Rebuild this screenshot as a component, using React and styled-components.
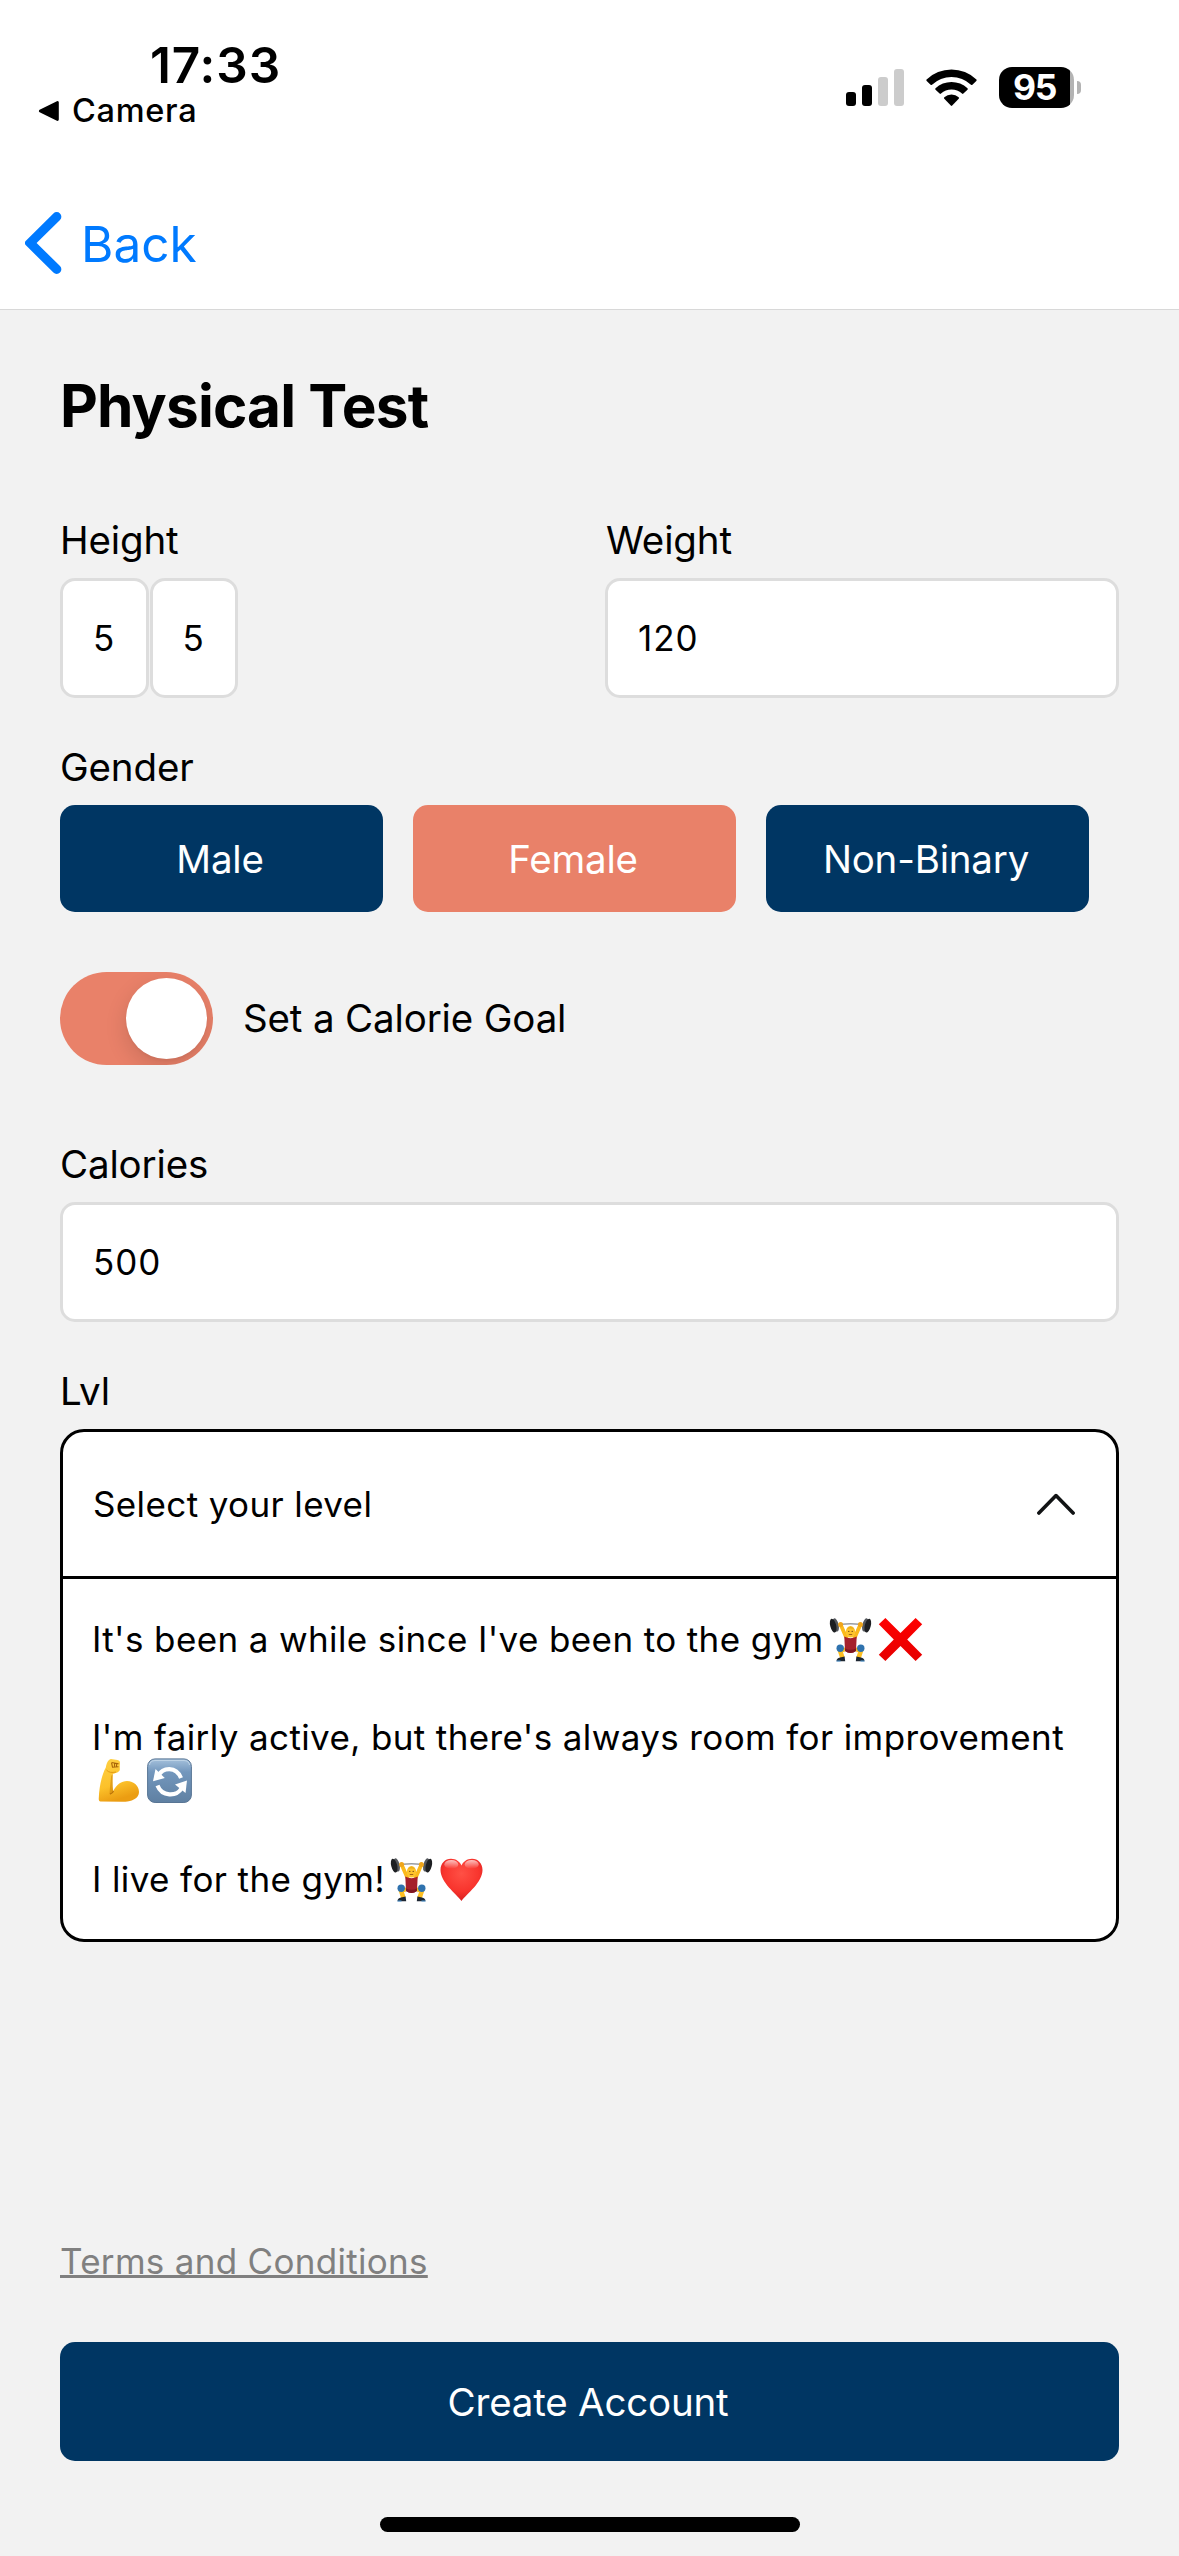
import React from "react";
import styled, { createGlobalStyle } from "styled-components";

const GlobalStyle = createGlobalStyle`
  *, *::before, *::after { box-sizing: border-box; }
  html, body { margin: 0; padding: 0; }
  body {
    background: #f2f2f2;
    color: #000;
    font-family: Inter, Roboto, "Liberation Sans", sans-serif;
    font-variant-ligatures: none;
  }
`;

const colors = {
  navy: "#003663",
  coral: "#e98169",
  blue: "#007aff",
  fieldBorder: "#dddddd",
};

/* ---------- layout ---------- */

const Screen = styled.div`
  display: flex;
  flex-direction: column;
  width: 1179px;
  height: 2556px;
  overflow: hidden;
  background: #f2f2f2;
`;

const Header = styled.header`
  display: flex;
  flex-direction: column;
  height: 310px;
  background: #fff;
  border-bottom: 1px solid #d8d8d8;
`;

const StatusBar = styled.div`
  display: flex;
  justify-content: space-between;
  height: 176px;
  padding: 35px 98px 0 38px;
`;

const StatusLeft = styled.div`
  display: flex;
  flex-direction: column;
`;

const Clock = styled.time`
  padding-left: 112px;
  font-size: 49.5px;
  font-weight: 600;
  line-height: 60px;
  letter-spacing: 0.9px;
`;

const ReturnLink = styled.div`
  display: flex;
  align-items: center;
  gap: 12px;
  height: 32px;
  font-size: 32.5px;
  font-weight: 450;
  line-height: 32px;
  letter-spacing: 0.7px;
`;

const StatusIcons = styled.div`
  display: flex;
  height: 41px;
  margin-top: 32px;
`;

const SignalIcon = styled.svg`
  width: 58px;
  height: 37px;
  margin-top: 2px;
`;

const WifiIcon = styled.svg`
  width: 51px;
  height: 38px;
  margin: 2px 22px 0;
`;

const Battery = styled.div`
  display: flex;
  align-items: center;
  gap: 3px;
`;

const BatteryCell = styled.div`
  display: flex;
  align-items: center;
  justify-content: center;
  width: 75px;
  height: 41px;
  padding: 0 4px 0 0;
  border-radius: 13px;
  background: linear-gradient(to right, #000 71px, #b3b3b3 71px);
  color: #fff;
  font-size: 35.5px;
  font-weight: 700;
  line-height: 41px;
  letter-spacing: -1.4px;
`;

const BatteryTip = styled.div`
  width: 4px;
  height: 13px;
  border-radius: 0 6px 6px 0;
  background: #b3b3b3;
`;

const BackButton = styled.div`
  display: flex;
  align-items: center;
  gap: 19px;
  height: 133px;
  padding: 0 0 0 25px;
  color: ${colors.blue};
  font-size: 49.5px;
  line-height: 60px;
  letter-spacing: 0;
`;

const BackIcon = styled.svg`
  width: 37px;
  height: 62px;
`;

const BackText = styled.span`
  padding-top: 2px;
`;

const Content = styled.main`
  display: flex;
  flex: 1;
  flex-direction: column;
  padding: 60px 60px 0;
`;

const Title = styled.h1`
  margin: 0 0 74px;
  font-size: 58.5px;
  font-weight: 700;
  line-height: 72px;
  letter-spacing: -0.85px;
`;

/* ---------- form ---------- */

const Form = styled.form`
  display: flex;
  flex-direction: column;
`;

const Columns = styled.div`
  display: grid;
  grid-template-columns: 514px 514px;
  column-gap: 31px;
  margin-bottom: 45px;
`;

const Field = styled.div`
  display: flex;
  flex-direction: column;
  margin-bottom: ${(p) => p.$below || 0}px;
`;

const Label = styled.div`
  height: 48px;
  margin-bottom: 14px;
  padding-left: ${(p) => p.$indent || 0}px;
  font-size: 38.5px;
  line-height: 48px;
  letter-spacing: -0.15px;
`;

const Inputs = styled.div`
  display: flex;
  gap: 1px;
`;

const Input = styled.div`
  display: flex;
  align-items: center;
  width: ${(p) => p.$width || "100%"};
  height: 120px;
  padding: 0 30px;
  border: 3px solid ${colors.fieldBorder};
  border-radius: 15px;
  background: #fff;
  font-size: 35px;
  letter-spacing: 0.9px;
`;

const Choices = styled.div`
  display: flex;
  gap: 30px;
`;

const Button = styled.button`
  display: flex;
  align-items: center;
  justify-content: center;
  width: ${(p) => p.$width || "100%"};
  height: ${(p) => p.$height}px;
  padding: 0 3px 0 0;
  border: 0;
  border-radius: 15px;
  background: ${(p) => (p.$selected ? colors.coral : colors.navy)};
  color: #fff;
  font-family: inherit;
  font-size: 38.5px;
  line-height: 48px;
  letter-spacing: -0.2px;
`;

const ToggleRow = styled.div`
  display: flex;
  align-items: center;
  gap: 30px;
  margin-bottom: 75px;
  font-size: 38.5px;
  line-height: 48px;
  letter-spacing: -0.15px;
`;

const ToggleText = styled.span`
  padding-bottom: 1px;
`;

const Switch = styled.div`
  display: flex;
  align-items: center;
  justify-content: flex-end;
  width: 153px;
  height: 93px;
  padding: 6px;
  border-radius: 47px;
  background: ${colors.coral};
  overflow: hidden;
`;

const Knob = styled.div`
  width: 81px;
  height: 81px;
  border-radius: 50%;
  background: #fff;
  box-shadow: 0 8px 22px rgba(0, 0, 0, 0.13), 0 2px 3px rgba(0, 0, 0, 0.04);
`;

/* ---------- dropdown ---------- */

const Dropdown = styled.div`
  display: flex;
  flex-direction: column;
  height: 513px;
  border: 3px solid #000;
  border-radius: 24px;
  background: #fff;
  font-size: 35px;
  line-height: 43px;
  letter-spacing: 0.38px;
`;

const DropdownHeader = styled.div`
  display: flex;
  align-items: center;
  justify-content: space-between;
  height: 147px;
  padding: 0 41px 0 30px;
  border-bottom: 3px solid #000;
`;

const ChevronIcon = styled.svg`
  width: 38px;
  height: 22px;
`;

const Options = styled.div`
  display: flex;
  flex-direction: column;
  gap: 55.3px;
  padding: 39px 20px 0 29px;
`;

const Option = styled.div`
  display: flex;
  flex-wrap: wrap;
`;

const Emojis = styled.span`
  display: flex;
  align-items: center;
  gap: 5.5px;
  height: 43px;
  padding-left: 4px;
`;

const Emoji = styled.svg`
  flex: none;
  width: 45px;
  height: 45px;
`;

/* ---------- footer ---------- */

const Footer = styled.footer`
  display: flex;
  flex-direction: column;
  align-items: flex-start;
  margin-top: auto;
  padding: 0 0 24px;
`;

const TermsLink = styled.span`
  margin-bottom: 59px;
  color: #808080;
  font-size: 35px;
  line-height: 43px;
  letter-spacing: 0.3px;
  text-decoration: underline;
  text-decoration-thickness: 3px;
  text-decoration-skip-ink: none;
  text-underline-offset: 1px;
`;

const HomeIndicator = styled.div`
  align-self: center;
  width: 420px;
  height: 15px;
  margin-top: 56px;
  border-radius: 8px;
  background: #000;
`;

/* ---------- emoji drawings ---------- */

const Lifter = () => (
  <Emoji viewBox="0 0 45 45">
    <path d="M5 9 Q22.5 4.5 40 9" fill="none" stroke="#9a9da3" strokeWidth="1.3" />
    <ellipse cx="7.6" cy="8" rx="3" ry="6.8" transform="rotate(-14 7.6 8)" fill="#55585d" />
    <ellipse cx="5.2" cy="8.6" rx="3" ry="7" transform="rotate(-14 5.2 8.6)" fill="#1d1f22" />
    <ellipse cx="37.4" cy="8" rx="3" ry="6.8" transform="rotate(14 37.4 8)" fill="#55585d" />
    <ellipse cx="39.8" cy="8.6" rx="3" ry="7" transform="rotate(14 39.8 8.6)" fill="#1d1f22" />
    <path d="M13 8.5 L18.5 21 M32 8.5 L26.5 21" stroke="#fbb91b" strokeWidth="3.8" strokeLinecap="round" />
    <circle cx="12.6" cy="7.6" r="2.5" fill="#efa51b" />
    <circle cx="32.4" cy="7.6" r="2.5" fill="#efa51b" />
    <path d="M17 33 L11.5 32 L14.5 41 M28 33 L33.5 32 L30.5 41" fill="none" stroke="#fdbf22" strokeWidth="4.6" strokeLinejoin="round" />
    <path d="M16.3 19.5 Q22.5 23 28.7 19.5 L28 34 Q22.5 38 17 34 Z" fill="#a5202c" />
    <path d="M17 31.5 Q22.5 34 28 31.5 L28 34 Q22.5 38 17 34 Z" fill="#7e1722" />
    <ellipse cx="22.5" cy="14.8" rx="4.7" ry="5.8" fill="#fdc32c" />
    <path d="M18.6 12.4 Q22.5 6.5 26.4 12.4 Q22.5 10.4 18.6 12.4Z" fill="#eeb01c" />
    <circle cx="20.8" cy="14.4" r="0.65" fill="#6b4213" />
    <circle cx="24.2" cy="14.4" r="0.65" fill="#6b4213" />
    <path d="M20.8 17.5 h3.4" stroke="#9b5b17" strokeWidth="0.9" />
    <circle cx="12.2" cy="31.3" r="3.7" fill="#2f72ae" />
    <circle cx="32.8" cy="31.3" r="3.7" fill="#2f72ae" />
    <path d="M8.5 44.3 Q8.6 41.2 12 40.6 L16.6 39.6 L17.2 44.3 Z" fill="#1d2733" />
    <path d="M36.5 44.3 Q36.4 41.2 33 40.6 L28.4 39.6 L27.8 44.3 Z" fill="#1d2733" />
    <path d="M8.5 44 h4 M32.5 44 h4" stroke="#4c9de0" strokeWidth="1.2" />
  </Emoji>
);

const Cross = () => (
  <Emoji viewBox="0 0 45 45">
    <defs>
      <linearGradient id="crossRed" x1="0" y1="0" x2="0" y2="1">
        <stop offset="0" stopColor="#ff0000" />
        <stop offset="1" stopColor="#e60000" />
      </linearGradient>
    </defs>
    <path
      d="M7.4 1 L22.5 16 L37.6 1 L44.2 7.3 L29.2 22.5 L44.2 37.7 L37.6 44 L22.5 29 L7.4 44 L0.8 37.7 L15.8 22.5 L0.8 7.3 Z"
      fill="url(#crossRed)"
    />
  </Emoji>
);

const Biceps = () => (
  <Emoji viewBox="0 0 45 45">
    <defs>
      <linearGradient id="armYellow" x1="0" y1="0" x2="0.3" y2="1">
        <stop offset="0" stopColor="#ffd145" />
        <stop offset="0.65" stopColor="#fcc12a" />
        <stop offset="1" stopColor="#eb9d12" />
      </linearGradient>
    </defs>
    <path
      d="M9.8 9.5 C10.5 5.5 12.2 1.5 15 1.1 L21.5 2 C24 2.4 24.4 4.5 23.8 7 L23.8 12 C23.2 14.5 18.5 15.2 16.7 16 C16.6 22 16 28.5 17.2 33 C20.5 26.5 25.5 23 31 23 C38 23 43 28 43 34 C43 40.5 36 43.8 26 43.8 L4.5 43.4 C3 43.2 2.6 42 2.8 40 C3.2 30 5.2 18 9.8 9.5 Z"
      fill="url(#armYellow)"
    />
    <path d="M15.2 18 C14.4 26 13.7 31 13.6 36 L17.3 33.8 C16.4 28 16.5 22 16.7 16 Z" fill="#d28a0b" opacity="0.65" />
    <path d="M14 36.2 C15.5 35.2 17 35 17.4 33" fill="none" stroke="#b87008" strokeWidth="1.2" />
    <path d="M15.5 4.5 L22.6 5.8 M15.6 5 L16.5 9.2 L22.5 8.8 M18.6 5.2 L18.5 8.6 M20.8 5.5 L20.4 8.4" fill="none" stroke="#a96408" strokeWidth="1.1" />
    <path d="M10.5 12 C12.5 14.6 16 14.9 20 14" fill="none" stroke="#e39a12" strokeWidth="1" />
  </Emoji>
);

const Refresh = () => (
  <Emoji viewBox="0 0 45 45">
    <defs>
      <linearGradient id="tileBlue" x1="0" y1="0" x2="0" y2="1">
        <stop offset="0" stopColor="#a5c1dc" />
        <stop offset="0.3" stopColor="#7397bd" />
        <stop offset="1" stopColor="#5f80a2" />
      </linearGradient>
    </defs>
    <rect x="0.6" y="0.9" width="43.8" height="43.6" rx="7.5" fill="url(#tileBlue)" stroke="#587594" strokeWidth="1" />
    <path d="M2.5 7 Q3 2.8 8 2.5 H37 Q42 2.8 42.5 7" fill="none" stroke="#c2d6e8" strokeWidth="0.9" />
    <g fill="none" stroke="#fff" strokeWidth="4.2">
      <path d="M11.5 17.5 C15.5 9.5 29 7.5 34 20" />
      <path d="M10.5 27.5 C15 39 29.5 38.5 34.5 30.5" />
    </g>
    <path d="M8.5 11 L6 23.3 L17.8 20 Z" fill="#fff" />
    <path d="M40 22.6 L28 26.4 L38.5 35 Z" fill="#fff" />
  </Emoji>
);

const Heart = () => (
  <Emoji viewBox="0 0 45 45">
    <defs>
      <radialGradient id="heartRed" cx="0.5" cy="0.35" r="0.65">
        <stop offset="0" stopColor="#ff5045" />
        <stop offset="0.65" stopColor="#f8342d" />
        <stop offset="1" stopColor="#d71f20" />
      </radialGradient>
      <linearGradient id="heartShine" x1="0" y1="0" x2="0" y2="1">
        <stop offset="0" stopColor="#fff" stopOpacity="0.7" />
        <stop offset="1" stopColor="#fff" stopOpacity="0" />
      </linearGradient>
    </defs>
    <path
      d="M22.5 44 C17 36.5 1.5 25.5 1.5 13 C1.5 6.5 6 1.8 12 1.8 C17 1.8 20.8 4.6 22.5 8.6 C24.2 4.6 28 1.8 33 1.8 C39 1.8 43.5 6.5 43.5 13 C43.5 25.5 28 36.5 22.5 44 Z"
      fill="url(#heartRed)"
    />
    <ellipse cx="12.3" cy="7.4" rx="7" ry="4.4" fill="url(#heartShine)" />
    <ellipse cx="32.7" cy="7.4" rx="7" ry="4.4" fill="url(#heartShine)" />
  </Emoji>
);

/* ---------- data ---------- */

const genders = ["Male", "Female", "Non-Binary"];

const levels = [
  { text: "It's been a while since I've been to the gym", icons: [Lifter, Cross] },
  { text: "I'm fairly active, but there's always room for improvement", icons: [Biceps, Refresh] },
  { text: "I live for the gym!", icons: [Lifter, Heart] },
];

export default function App() {
  return (
    <Screen>
      <GlobalStyle />
      <Header>
        <StatusBar>
          <StatusLeft>
            <Clock>17:33</Clock>
            <ReturnLink>
              <svg width="22" height="22" viewBox="0 0 22 22">
                <path d="M2.2 11 L19.5 2.4 V19.6 Z" stroke="#000" strokeWidth="2.6" strokeLinejoin="round" />
              </svg>
              Camera
            </ReturnLink>
          </StatusLeft>
          <StatusIcons>
            <SignalIcon viewBox="0 0 58 37">
              <rect x="0" y="23" width="10" height="14" rx="3" />
              <rect x="16" y="16" width="10" height="21" rx="3" />
              <rect x="32" y="8" width="10" height="29" rx="3" fill="#ccc" />
              <rect x="48" y="0" width="10" height="37" rx="3" fill="#ccc" />
            </SignalIcon>
            <WifiIcon viewBox="0 0 51 38">
              <path d="M0.6 10.4 A36 36 0 0 1 50.4 10.4 Q51 11.2 50.3 11.9 L46.4 15.8 Q45.7 16.3 45 15.7 A28.5 28.5 0 0 0 6 15.7 Q5.3 16.3 4.6 15.8 L0.7 11.9 Q0 11.2 0.6 10.4 Z" />
              <path d="M9.5 19.2 A23.5 23.5 0 0 1 41.5 19.2 Q42.1 20 41.5 20.7 L37.4 24.6 Q36.7 25.2 36 24.6 A15.5 15.5 0 0 0 15 24.6 Q14.3 25.2 13.6 24.6 L9.5 20.7 Q8.9 20 9.5 19.2 Z" />
              <path d="M18.3 28.2 A10.6 10.6 0 0 1 32.7 28.2 Q33.4 29 32.7 29.8 L26.2 36.6 Q25.5 37.2 24.8 36.6 L18.3 29.8 Q17.6 29 18.3 28.2 Z" />
            </WifiIcon>
            <Battery>
              <BatteryCell>95</BatteryCell>
              <BatteryTip />
            </Battery>
          </StatusIcons>
        </StatusBar>
        <BackButton>
          <BackIcon viewBox="0 0 37 62">
            <path
              d="M0.4 29.2 L28.4 1.4 A4.6 4.6 0 0 1 35 8 L11.6 31 L35 54 A4.6 4.6 0 0 1 28.4 60.6 L0.4 32.8 Q-0.6 31 0.4 29.2 Z"
              fill={colors.blue}
            />
          </BackIcon>
          <BackText>Back</BackText>
        </BackButton>
      </Header>

      <Content>
        <Title>Physical Test</Title>
        <Form>
          <Columns>
            <Field>
              <Label>Height</Label>
              <Inputs>
                <Input $width="88.5px">5</Input>
                <Input $width="88.5px">5</Input>
              </Inputs>
            </Field>
            <Field>
              <Label $indent={1}>Weight</Label>
              <Input>120</Input>
            </Field>
          </Columns>

          <Field $below={60}>
            <Label>Gender</Label>
            <Choices>
              {genders.map((name) => (
                <Button key={name} type="button" $width="323px" $height={107} $selected={name === "Female"}>
                  {name}
                </Button>
              ))}
            </Choices>
          </Field>

          <ToggleRow>
            <Switch>
              <Knob />
            </Switch>
            <ToggleText>Set a Calorie Goal</ToggleText>
          </ToggleRow>

          <Field $below={45}>
            <Label>Calories</Label>
            <Input>500</Input>
          </Field>

          <Field>
            <Label>Lvl</Label>
            <Dropdown>
              <DropdownHeader>
                Select your level
                <ChevronIcon viewBox="0 0 38 22">
                  <path d="M1.9 20 L19 2.6 L36.1 20" fill="none" stroke="#111314" strokeWidth="3.6" strokeLinecap="round" strokeLinejoin="round" />
                </ChevronIcon>
              </DropdownHeader>
              <Options>
                {levels.map(({ text, icons }) => (
                  <Option key={text}>
                    <span>{text}</span>
                    <Emojis>
                      {icons.map((Icon, i) => (
                        <Icon key={i} />
                      ))}
                    </Emojis>
                  </Option>
                ))}
              </Options>
            </Dropdown>
          </Field>
        </Form>

        <Footer>
          <TermsLink>Terms and Conditions</TermsLink>
          <Button type="button" $height={119}>
            Create Account
          </Button>
          <HomeIndicator />
        </Footer>
      </Content>
    </Screen>
  );
}
